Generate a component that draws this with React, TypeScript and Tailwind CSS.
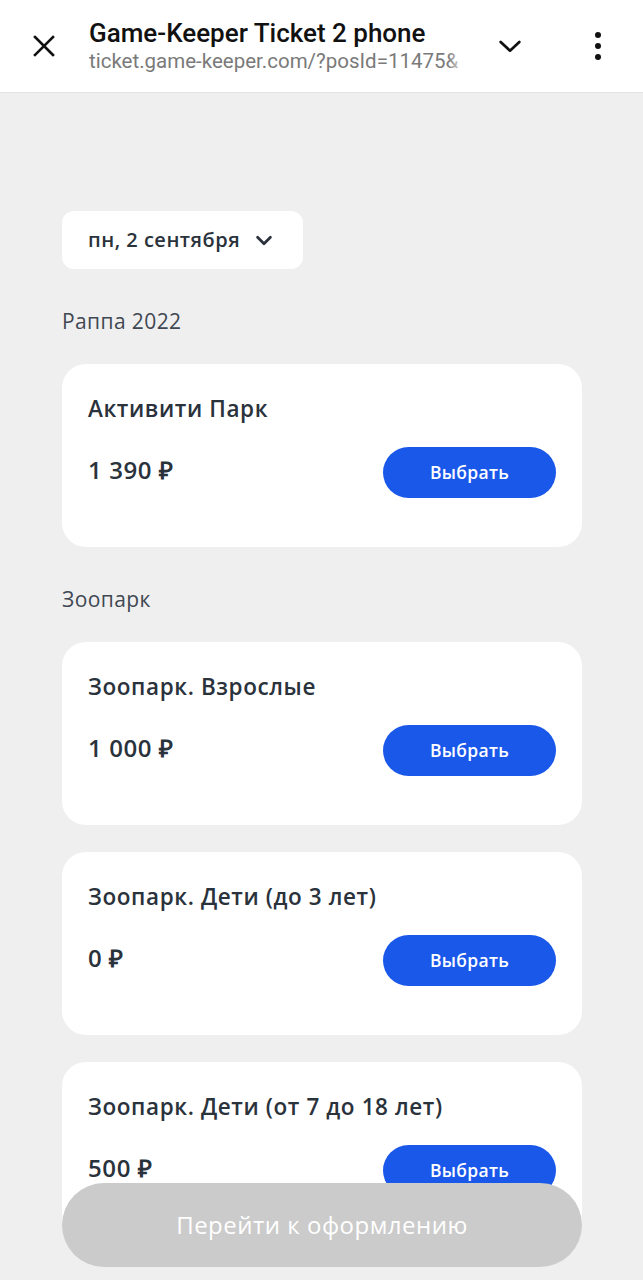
import React from "react";

type Ticket = {
  title: string;
  price: string;
};

type Group = {
  name: string;
  tickets: Ticket[];
};

const groups: Group[] = [
  { name: "Раппа 2022", tickets: [{ title: "Активити Парк", price: "1 390 ₽" }] },
  {
    name: "Зоопарк",
    tickets: [
      { title: "Зоопарк. Взрослые", price: "1 000 ₽" },
      { title: "Зоопарк. Дети (до 3 лет)", price: "0 ₽" },
      { title: "Зоопарк. Дети (от 7 до 18 лет)", price: "500 ₽" },
    ],
  },
];

function BrowserBar() {
  return (
    <header className="flex h-[93px] items-center border-b border-[#e2e2e2] bg-white font-['Roboto',sans-serif]">
      <div className="flex w-[89px] justify-center pr-[2px]">
        <svg width="24" height="24" viewBox="0 0 24 24" fill="none" stroke="#111" strokeWidth="2.6" strokeLinecap="square">
          <path d="M3 3l18 18M21 3L3 21" />
        </svg>
      </div>
      <div className="min-w-0 w-[377px]">
        <p className="text-[26px] font-medium leading-[30px] text-[#111] whitespace-nowrap">Game-Keeper Ticket 2 phone</p>
        <div className="relative overflow-hidden whitespace-nowrap text-[20.5px] leading-[26px] text-[#7a7a7a]">
          ticket.game-keeper.com/?posId=11475&amp;
          <div className="absolute right-0 top-0 h-full w-[18px] bg-gradient-to-r from-transparent to-white" />
        </div>
      </div>
      <div className="flex flex-1 justify-center pl-[10px] pr-[10px]">
        <svg width="28" height="28" viewBox="0 0 24 24" fill="none" stroke="#111" strokeWidth="2.3" strokeLinecap="round" strokeLinejoin="round">
          <path d="M4 8.5l8 7.5 8-7.5" />
        </svg>
      </div>
      <div className="flex w-[90px] flex-col items-center gap-[5px]">
        <span className="h-[6px] w-[6px] rounded-full bg-[#111]" />
        <span className="h-[6px] w-[6px] rounded-full bg-[#111]" />
        <span className="h-[6px] w-[6px] rounded-full bg-[#111]" />
      </div>
    </header>
  );
}

function TicketCard({ ticket }: { ticket: Ticket }) {
  return (
    <article className="rounded-[24px] bg-white px-[26px] pt-[31px] pb-[49px]">
      <h3 className="text-[22.5px] font-semibold leading-[28px] tracking-[0.6px] text-[#2a323c]">{ticket.title}</h3>
      <div className="mt-[24px] flex items-center justify-between">
        <p className="pb-[5px] text-[24px] font-semibold tracking-[0.6px] text-[#2a323c]">{ticket.price}</p>
        <button className="h-[51px] w-[173px] rounded-full bg-[#1a58ea] text-[17.5px] font-semibold tracking-[0.3px] text-white">
          Выбрать
        </button>
      </div>
    </article>
  );
}

export default function App() {
  return (
    <div className="relative h-[1280px] overflow-hidden bg-[#efefef] font-['Open_Sans',sans-serif]">
      <BrowserBar />
      <main className="pl-[62px] pr-[61px] pt-[118px]">
        <div className="flex h-[58px] w-[241px] items-center gap-[12px] rounded-[12px] bg-white pl-[26px] pr-[26px]">
          <span className="w-[153px] shrink-0 overflow-hidden whitespace-nowrap text-[20px] font-semibold tracking-[0.5px] text-[#2a323c]">
            пн, 2 сентября
          </span>
          <svg width="22" height="22" viewBox="0 0 24 24" fill="none" stroke="#2a323c" strokeWidth="3" strokeLinecap="round" strokeLinejoin="round">
            <path d="M5 9l7 7 7-7" />
          </svg>
        </div>
        {groups.map((g) => (
          <section key={g.name}>
            <h2 className="mt-[40px] mb-[31px] text-[21px] leading-[24px] tracking-[0.4px] text-[#3f4852]">{g.name}</h2>
            <div className="flex flex-col gap-[27px]">
              {g.tickets.map((t) => (
                <TicketCard key={t.title} ticket={t} />
              ))}
            </div>
          </section>
        ))}
      </main>
      <button className="absolute left-[62px] top-[1183px] h-[84px] w-[520px] rounded-full bg-[#cbcbcb] text-[24px] font-medium tracking-[0.5px] text-white">
        Перейти к оформлению
      </button>
    </div>
  );
}
